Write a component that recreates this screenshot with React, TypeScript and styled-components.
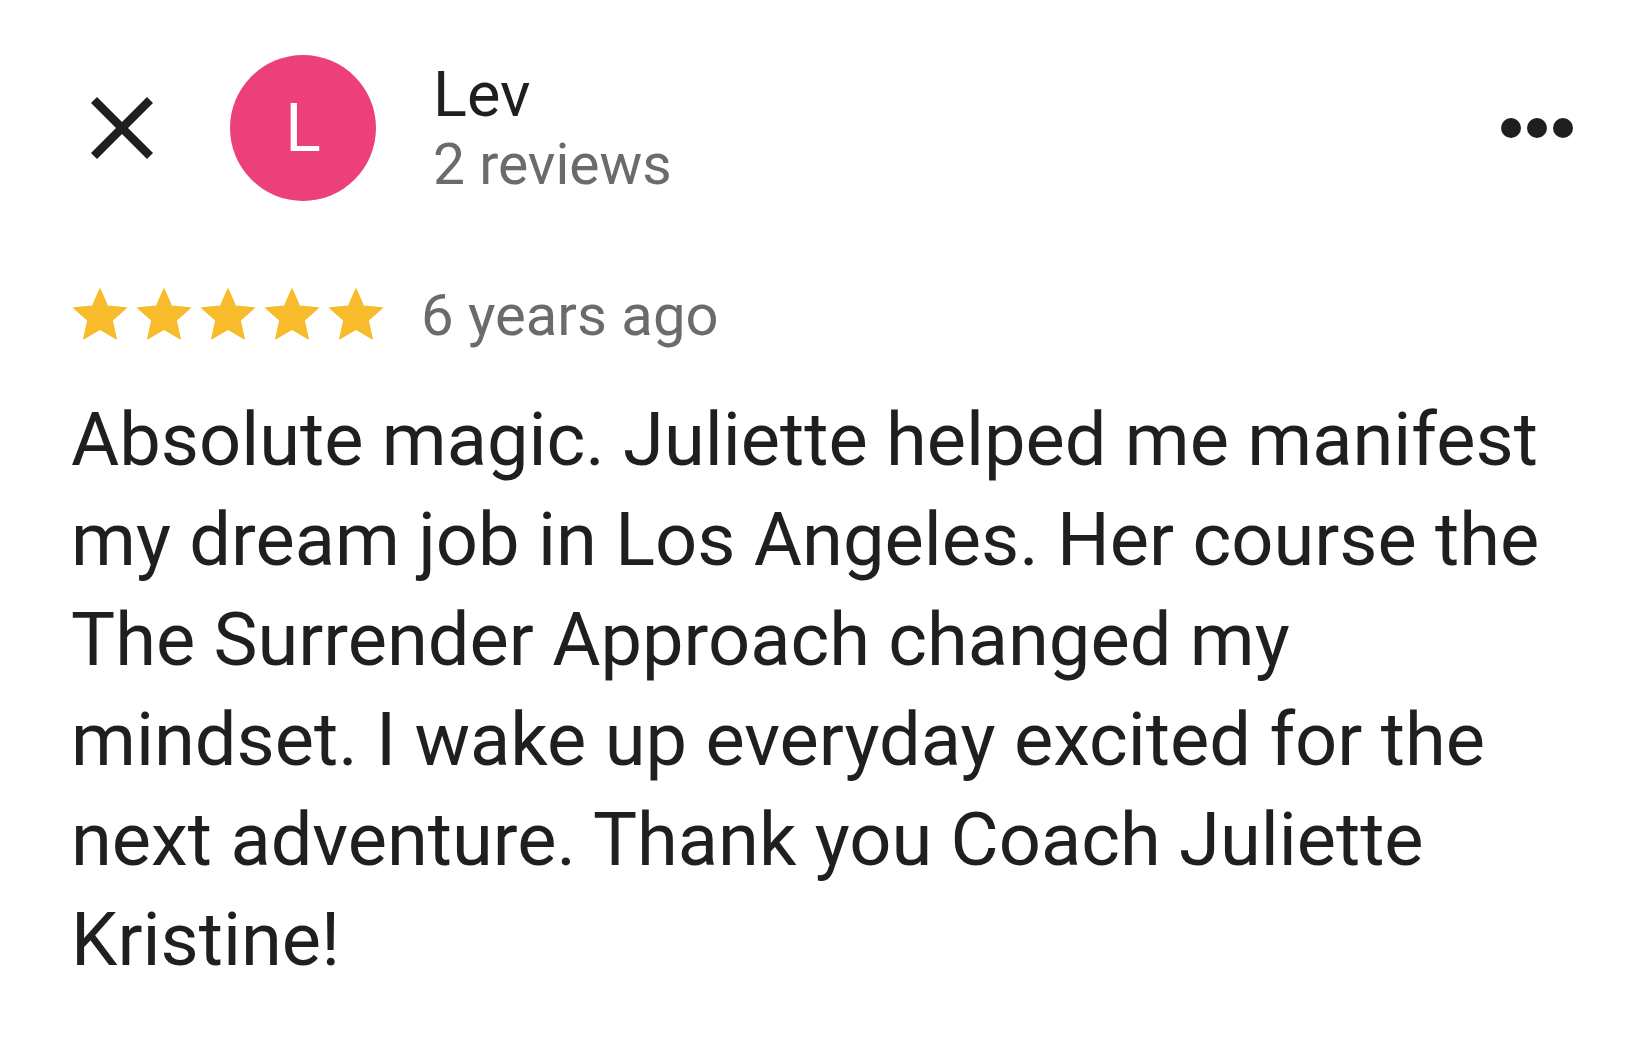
import styled, { createGlobalStyle } from 'styled-components';

const GlobalStyle = createGlobalStyle`
  html, body {
    margin: 0;
    padding: 0;
    background: #ffffff;
  }
  body {
    font-family: Roboto, "Liberation Sans", Arial, sans-serif;
    color: #202124;
  }
`;

const Page = styled.div`
  width: 1637px;
  height: 1041px;
  box-sizing: border-box;
  padding: 55px 64px 0 71px;
  background: #ffffff;
`;

const Header = styled.header`
  display: flex;
  align-items: center;
  height: 146px;
`;

const CloseButton = styled.button`
  display: flex;
  align-items: center;
  justify-content: center;
  width: 64px;
  height: 64px;
  margin-left: 19px;
  padding: 0;
  border: none;
  background: none;
  cursor: pointer;
`;

const Avatar = styled.div`
  display: flex;
  align-items: center;
  justify-content: center;
  width: 146px;
  height: 146px;
  margin-left: 76px;
  border-radius: 50%;
  background: #ec407a;
  color: #ffffff;
  font-size: 66px;
  font-weight: 400;
`;

const Author = styled.div`
  display: flex;
  flex-direction: column;
  margin-left: 57px;
  flex: 1;
`;

const Name = styled.div`
  font-size: 63px;
  line-height: 74px;
  color: #1f1f1f;
`;

const ReviewCount = styled.div`
  font-size: 57px;
  line-height: 66px;
  color: #6b6b6b;
`;

const MoreButton = styled.button`
  display: flex;
  gap: 6px;
  padding: 0;
  border: none;
  background: none;
  cursor: pointer;
`;

const Dot = styled.span`
  width: 20px;
  height: 20px;
  border-radius: 50%;
  background: #1f1f1f;
`;

const RatingRow = styled.div`
  display: flex;
  align-items: center;
  margin-top: 80px;
`;

const Stars = styled.div`
  display: flex;
  gap: 6px;
`;

const When = styled.span`
  margin-left: 36px;
  font-size: 58px;
  color: #6b6b6b;
`;

const Body = styled.p`
  margin: 41px 0 0;
  font-size: 74px;
  line-height: 100px;
  color: #1f1f1f;
  white-space: nowrap;
`;

const Star = () => (
  <svg width="58" height="56" viewBox="0 0 24 23" aria-hidden="true">
    <path
      fill="#f8bb2c"
      stroke="#f8bb2c"
      strokeWidth="0.6"
      strokeLinejoin="round"
      d="M12 0.8l3.1 7.1 7.7 0.7-5.8 5.1 1.7 7.6L12 17.3l-6.7 4 1.7-7.6-5.8-5.1 7.7-0.7z"
    />
  </svg>
);

const App = () => {
  return (
    <Page>
      <GlobalStyle />
      <Header>
        <CloseButton aria-label="Close">
          <svg width="64" height="64" viewBox="0 0 64 64">
            <path d="M4 4L60 60M60 4L4 60" stroke="#1f1f1f" strokeWidth="8.5" />
          </svg>
        </CloseButton>
        <Avatar>L</Avatar>
        <Author>
          <Name>Lev</Name>
          <ReviewCount>2 reviews</ReviewCount>
        </Author>
        <MoreButton aria-label="More options">
          <Dot />
          <Dot />
          <Dot />
        </MoreButton>
      </Header>
      <RatingRow>
        <Stars>
          <Star />
          <Star />
          <Star />
          <Star />
          <Star />
        </Stars>
        <When>6 years ago</When>
      </RatingRow>
      <Body>
        Absolute magic. Juliette helped me manifest
        <br />
        my dream job in Los Angeles. Her course the
        <br />
        The Surrender Approach changed my
        <br />
        mindset. I wake up everyday excited for the
        <br />
        next adventure. Thank you Coach Juliette
        <br />
        Kristine!
      </Body>
    </Page>
  );
};

export default App;
